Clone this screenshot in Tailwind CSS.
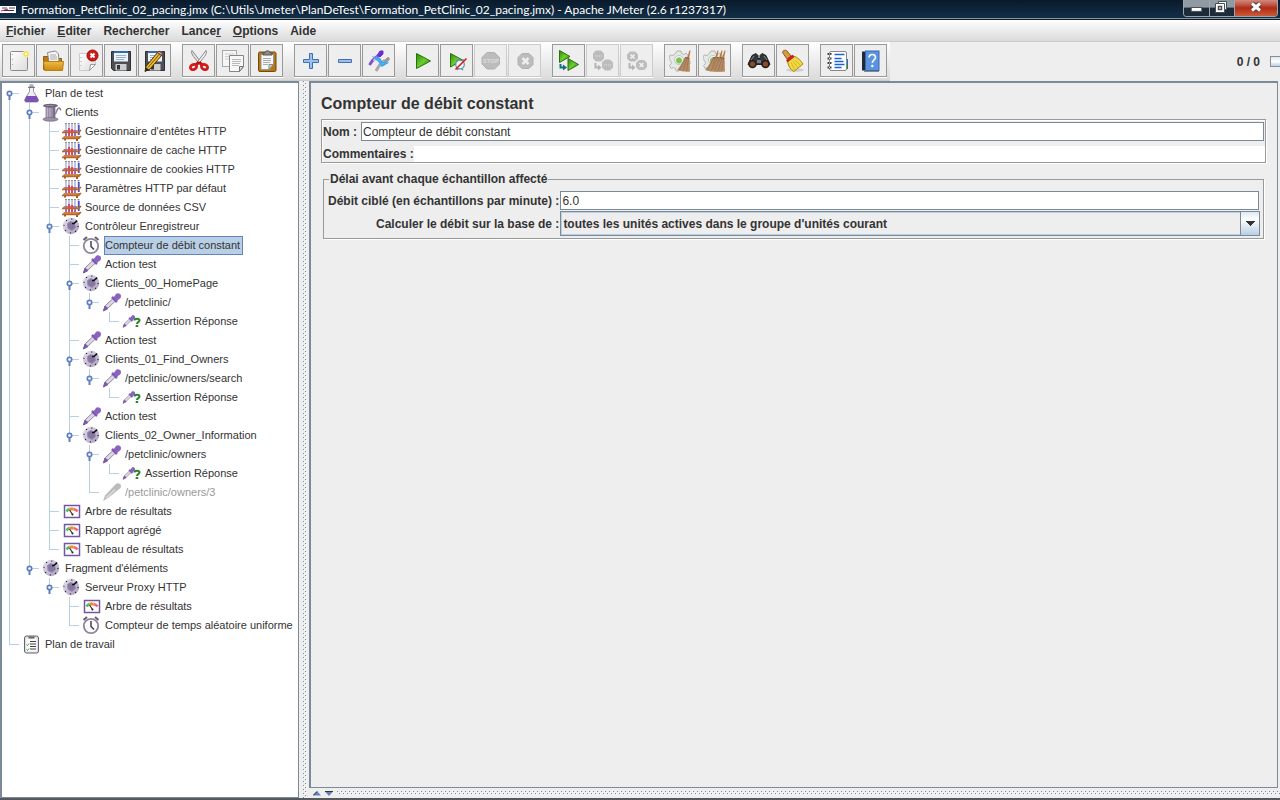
<!DOCTYPE html>
<html lang="fr">
<head>
    <meta charset="UTF-8">
    <meta name="viewport" content="width=device-width, initial-scale=1.0">
    <title>Formation_PetClinic_02_pacing.jmx - Apache JMeter</title>
    <script src="https://cdn.jsdelivr.net/npm/@tailwindcss/browser@4"></script>
</head>
<body class="h-screen flex flex-col overflow-hidden bg-[#eeeeee] text-[#333333] text-[12px] leading-[14px] font-['Liberation_Sans',Arial,sans-serif]">
    <!-- Icon definitions -->
    <svg width="0" height="0" class="absolute" aria-hidden="true">
        <defs>
            <linearGradient id="gPlay" x1="0" y1="0" x2="1" y2="1"><stop offset="0" stop-color="#2a8a08"/><stop offset=".5" stop-color="#6ccf2c"/><stop offset="1" stop-color="#237a04"/></linearGradient>
            <linearGradient id="gPage" x1="0" y1="0" x2="1" y2="1"><stop offset="0" stop-color="#ffffff"/><stop offset="1" stop-color="#dcdcdc"/></linearGradient>
            <linearGradient id="gFolder" x1="0" y1="0" x2="0" y2="1"><stop offset="0" stop-color="#f0bb45"/><stop offset="1" stop-color="#c98a10"/></linearGradient>
            <linearGradient id="gKnob" x1="0" y1="0" x2="1" y2="1"><stop offset="0" stop-color="#e6e1ef"/><stop offset="1" stop-color="#a99dbd"/></linearGradient>
            <pattern id="bumps" width="4" height="4" patternUnits="userSpaceOnUse"><rect width="4" height="4" fill="#eeeeee"/><path fill="#fff" d="M1 1h1v1H1zM3 3h1v1H3z"/><path fill="#7a8a99" d="M0 0h1v1H0zM2 2h1v1H2z"/></pattern>

            <symbol id="new" viewBox="0 0 24 24"><rect x="3.5" y="2.5" width="17" height="19" rx="1" fill="url(#gPage)" stroke="#8a8a8a"/><path d="M5.5 5v1M5.5 10v1M5.5 15v1" stroke="#aaa"/><circle cx="19" cy="5" r="3.5" fill="#f7ee9a"/><circle cx="19" cy="5" r="2" fill="#fffde0" stroke="#e8d63a"/></symbol>
            <symbol id="open" viewBox="0 0 24 24"><path d="M2.5 7.5h5l1 2h12v11h-18z" fill="#b87a14" stroke="#8f5e0c"/><path d="M6.5 3.5l8-1.5 3 3 .5 8-10 1z" fill="#f5f5f5" stroke="#888"/><path d="M9 6h6M9 8h7M9 10h7" stroke="#aaa"/><path d="M2.5 12.5h20l-1 9h-18z" fill="url(#gFolder)" stroke="#b9800f"/></symbol>
            <symbol id="close" viewBox="0 0 24 24"><path d="M4.5 4.5h16v11l-6 6h-10z" fill="url(#gPage)" stroke="#ccc"/><path d="M14.5 21.5l1-6 5 0z" fill="#fff" stroke="#999"/><path d="M6 8v1M6 12v1M6 16v1" stroke="#aaa"/><circle cx="17.5" cy="6.5" r="5.5" fill="#d01818" stroke="#9c0808"/><path d="M15.5 4.5l4 4M19.5 4.5l-4 4" stroke="#fff" stroke-width="2"/></symbol>
            <symbol id="save" viewBox="0 0 24 24"><path d="M2.5 2.5h19v19h-17l-2-2z" fill="#4c4f55" stroke="#2c2f34"/><rect x="5" y="2.5" width="14" height="10" fill="#eef3f9"/><path d="M5 3h14" stroke="#356ca8" stroke-width="2"/><path d="M7 6.5h10M7 8.5h10M7 10.5h8" stroke="#9ab0c8"/><rect x="6.5" y="15" width="11" height="6.5" fill="#cdcdcd"/><rect x="8" y="16" width="3" height="4.5" fill="#33363b"/></symbol>
            <symbol id="pencil" viewBox="0 0 24 24"><path d="M2 22.5l1-5L14.5 3.5l4 3L7 20z" fill="#f0b929" stroke="#4a3508"/><path d="M5 18.5L16.5 5" stroke="#7a5208"/><path d="M2 22.5l1-4 3 2z" fill="#222"/><path d="M14.5 3.5l1.5-1.5 3.5 2.5-1 2z" fill="#e8a090" stroke="#5c3b2c"/></symbol>
            <symbol id="cut" viewBox="0 0 24 24"><path d="M5 1.5c-1 2 0 4 1.5 6l6.5 8 1.5-1.5z" fill="#e4e4e4" stroke="#888"/><path d="M19 1.5c1 2 0 4-1.5 6l-6.5 8-1.5-1.5z" fill="#f4f4f4" stroke="#888"/><path d="M12 13l-3 3M12 13l3 3" stroke="#c01010" stroke-width="3"/><ellipse cx="6.5" cy="18" rx="3.2" ry="2.5" transform="rotate(-25 6.5 18)" fill="#eee" stroke="#d41a1a" stroke-width="2.8"/><ellipse cx="17.5" cy="18" rx="3.2" ry="2.5" transform="rotate(25 17.5 18)" fill="#eee" stroke="#d41a1a" stroke-width="2.8"/></symbol>
            <symbol id="copy" viewBox="0 0 24 24"><rect x="1.5" y="1.5" width="14" height="16" fill="#f6f6f6" stroke="#aaa"/><path d="M4 5h9M4 7.5h7M4 10h4" stroke="#ccc"/><path d="M8.5 6.5h14v11l-4 5h-10z" fill="#f8f8f8" stroke="#858585"/><path d="M11 10.5h9M11 12.5h9M11 14.5h8M11 16.5h7" stroke="#b8b8b8"/><path d="M18.5 22.5v-5h4z" fill="#ddd" stroke="#777"/></symbol>
            <symbol id="paste" viewBox="0 0 24 24"><rect x="3.5" y="3" width="17.5" height="19.5" rx="1.5" fill="#b5770f" stroke="#76490a"/><path d="M6 5.5h12.5v10l-4.5 5H6z" fill="#f7f7f7" stroke="#999"/><path d="M8 9.5h8M8 11.5h8M8 13.5h7M8 15.5h5" stroke="#aaa"/><path d="M14 20.5v-5h4.5z" fill="#d0d0d0" stroke="#888"/><path d="M8 6V4h2c0-3 5-3 5 0h2v2z" fill="#8e9185" stroke="#555"/></symbol>
            <symbol id="plus" viewBox="0 0 24 24"><path d="M10.5 4.5h3v6h6v3h-6v6h-3v-6h-6v-3h6z" fill="#9cc0ea" stroke="#3f70b4"/></symbol>
            <symbol id="minus" viewBox="0 0 24 24"><path d="M5.5 10.5h13v3h-13z" fill="#9cc0ea" stroke="#3f70b4"/></symbol>
            <symbol id="toggle" viewBox="0 0 24 24"><path d="M9 22l3-5 6-6" fill="none" stroke="#a8a8a8" stroke-width="3"/><path d="M17 12l3-3c1.5-1 3 0 2 2l-3 3z" fill="#999" stroke="#999"/><path d="M2.5 16l3-4.5L12 6" fill="none" stroke="#7f52cc" stroke-width="3"/><path d="M6.5 11.5L10 8" stroke="#ddd" stroke-width="1.5"/><path d="M10.5 6L13 2h3v3l-3 3z" fill="#6a2fd0" stroke="#6a2fd0"/><path d="M7.5 8.5l5 1 2.5 4 5 .5-5 3-3-4.5z" fill="#5cc0fa" stroke="#38a4ee" stroke-width="1.5"/></symbol>
            <symbol id="play" viewBox="0 0 24 24"><path d="M5.5 4.5l14 7.5-14 7.5z" fill="url(#gPlay)" stroke="#2c6e10"/></symbol>
            <symbol id="playnow" viewBox="0 0 24 24"><path d="M5.5 4.5l12 6.5-12 7z" fill="url(#gPlay)" stroke="#2c6e10"/><circle cx="15" cy="15.5" r="4.3" fill="#eaf4fa" stroke="#5f8fa8" stroke-width="1.2"/><path d="M11 10.5l2 1.5M19 10.5L17 12M12 21l1.5-1.5M18 21l-1.5-1.5" stroke="#5f8fa8" stroke-width="1.5"/><path d="M10.5 20.5l11-11" stroke="#e01010" stroke-width="1.5"/></symbol>
            <symbol id="stop" viewBox="0 0 24 24"><path d="M8 3.5h7.5l5 5V15l-5 5H8l-5-5V8.5z" fill="#bcbcbc" stroke="#b0b0b0"/><text x="11.8" y="14" text-anchor="middle" font-size="6" font-weight="bold" font-family="Liberation Sans" fill="#ddd">STOP</text></symbol>
            <symbol id="shut" viewBox="0 0 24 24"><path d="M9 4.5h7l4 4v7l-4 4H9l-4-4v-7z" fill="#bcbcbc" stroke="#b0b0b0"/><path d="M9.5 9l6 6M15.5 9l-6 6" stroke="#eee" stroke-width="2.5"/></symbol>
            <symbol id="rstart" viewBox="0 0 24 24"><path d="M2.5 1.5l10.5 6-10.5 6z" fill="url(#gPlay)" stroke="#2c6e10"/><path d="M11 9.5l10.5 6-10.5 6z" fill="url(#gPlay)" stroke="#2c6e10"/><path d="M3.5 15v3.5H7" fill="none" stroke="#136c85" stroke-width="2"/><path d="M6 15.5l4 3-4 3z" fill="#136c85"/></symbol>
            <symbol id="rstop" viewBox="0 0 24 24"><path d="M5 1.5h5l3 3v5l-3 3H5l-3-3v-5zM14 10.5h5l3 3v5l-3 3h-5l-3-3v-5z" fill="#bcbcbc"/><path d="M4 7h7M13 16h7" stroke="#cfcfcf" stroke-width="2" stroke-dasharray="1 1"/><path d="M4.5 14v4.5H8" fill="none" stroke="#b4b4b4" stroke-width="2"/><path d="M7 15.5l3.5 3-3.5 3z" fill="#b4b4b4"/></symbol>
            <symbol id="rshut" viewBox="0 0 24 24"><path d="M5 2.5h5l3 3v4l-3 3H5l-3-3v-4zM14 11h5l3 3v4l-3 3h-5l-3-3v-4z" fill="#bcbcbc"/><path d="M5.5 5.5l4 4M9.5 5.5l-4 4M14.5 14l4 4M18.5 14l-4 4" stroke="#f2f2f2" stroke-width="1.5"/><path d="M4.5 14v4.5H8" fill="none" stroke="#b4b4b4" stroke-width="2"/><path d="M7 15.5l3.5 3-3.5 3z" fill="#b4b4b4"/></symbol>
            <symbol id="gear" viewBox="0 0 24 24"><path d="M8 2h4l.5 2.5 2.5 1 2-1.5 2.500 3-1.500 2 1 2.500 2 .5v3h-2.500l-1.500 2.500 1 2-3 2-2-1.500-2 .5-1 1.500H7l-.5-2.500-2-1-2.500 1-1.500-3 2-2-.5-2L0 9.500 1 6l3 .5 2-1.500z" fill="#e6e8e6" stroke="#b4b8b4"/><circle cx="10" cy="11" r="4.500" fill="#f3f5f3" stroke="#c0c4c0"/><circle cx="10" cy="11.5" r="2.700" fill="#6dd030" stroke="#8fb080" stroke-width=".8"/></symbol>
            <symbol id="bristle" viewBox="0 0 24 24"><path d="M20.500 1.500L18 9l2 .5 1.500-8z" fill="#b5793f"/><path d="M16 8l4.500 1 .5 13.500c-4 .5-9 0-13-1.500 4-4 6-9 8-13z" fill="#b58e68"/><path d="M16.500 9l-6 12M18 9l-4 13M19.500 10l-2 12" stroke="#936d48" stroke-width=".7"/><path d="M16 8.500l4.500 1" stroke="#8b5a30"/></symbol>
            <symbol id="clear" viewBox="0 0 24 24"><use href="#gear"/><use href="#bristle"/></symbol>
            <symbol id="clearall" viewBox="0 0 24 24"><use href="#gear"/><use href="#bristle" x="-6"/><use href="#bristle" x="-2"/><use href="#bristle" x="1"/></symbol>
            <symbol id="find" viewBox="0 0 24 24"><path d="M5 6.5l4-2 2 2v3h2v-3l2-2 4 2 4 9H1z" fill="#33363a" stroke="#1e2022"/><path d="M4 11l3-4M20 11l-3-4" stroke="#85898e"/><circle cx="5.5" cy="15" r="4.3" fill="#202226"/><circle cx="18.5" cy="15" r="4.3" fill="#202226"/><circle cx="5.5" cy="15" r="2.6" fill="#8c4c26"/><circle cx="18.5" cy="15" r="2.6" fill="#8c4c26"/><path d="M10 11h4v3h-4z" fill="#777b80"/></symbol>
            <symbol id="broom" viewBox="0 0 24 24"><ellipse cx="14" cy="21" rx="9" ry="1.8" fill="#cfcfcf"/><path d="M1.5 3.5c0-2 3-3 4.5-1.5l4 5-4 3z" fill="#d99a3b" stroke="#8a5a18"/><path d="M6.5 11.5L12 7c5 1 8 5 10 8l-9 7.5c-4-2-6-6-6.5-11z" fill="#f3d842" stroke="#a88a12"/><path d="M10 13.5l4 7.5M12 12l5 7M14 11l6 6" stroke="#d4b62c"/><path d="M5.5 11l6-5L13 8l-6.5 5z" fill="#d42020" stroke="#9c1010" stroke-width=".6"/></symbol>
            <symbol id="func" viewBox="0 0 24 24"><path d="M20 10h3v5h-3z" fill="#1a74d8"/><path d="M20 15h3v5h-3z" fill="#169030"/><rect x="4.5" y="2.5" width="17" height="19" rx="1.5" fill="#fff" stroke="#888"/><path d="M9.5 5.5h10M9.5 9.5h7M9.5 12.5h9M9.5 15.5h10M9.5 18.5h7" stroke="#1c62e0" stroke-width="1.3"/><path d="M2.5 5h4M2.5 9.5h4M2.5 14h4M2.5 18.5h4" stroke="#444" stroke-width="1.8"/><path d="M4 5h1M4 9.5h1M4 14h1M4 18.5h1" stroke="#eee"/></symbol>
            <symbol id="help" viewBox="0 0 24 24"><path d="M3 2.5h4v19H3z" fill="#1f2a38"/><rect x="6.5" y="2" width="13.5" height="19.5" fill="#5a94e0" stroke="#3968ae"/><path d="M5 22.5h15" stroke="#888"/><path d="M10 8.5c0-4 6.5-4 6.5 0 0 2.5-3.2 2.5-3.2 5.5" fill="none" stroke="#fff" stroke-width="1.6"/><circle cx="13.3" cy="17" r="1.2" fill="#fff"/></symbol>

            <symbol id="flask" viewBox="0 0 20 19"><path d="M7.5 2.5v5L3 15c-1 2 0 3 1.5 3h10c2 0 2.5-1.5 1.5-3l-4.5-7.5v-5z" fill="#f1eef5" stroke="#98929f"/><path d="M4.5 12h10l1.5 3c.5 2 0 3-1.5 3h-10C3 18 2.5 17 3 15.5z" fill="#7b52b4"/><path d="M6 3.5h7M7.5 1h4" stroke="#777"/></symbol>
            <symbol id="spool" viewBox="0 0 20 19"><path d="M13 11c2-1 1.5-6 4-6 1.5 0 1.5 1 1.5 2.5" fill="none" stroke="#8c8298" stroke-width="1.5"/><path d="M3.5 3h10v13h-10z" fill="#9a8da8"/><path d="M5.5 4v12M8 4v12" stroke="#bdb2c9"/><path d="M12 3v13" stroke="#7b6e88" stroke-width="2"/><ellipse cx="8.5" cy="2.7" rx="7.5" ry="2" fill="#6f6379"/><path d="M4 2.5h8" stroke="#978ba2"/><ellipse cx="8.5" cy="16.3" rx="7.5" ry="1.9" fill="#9b90a5" stroke="#75697e" stroke-width=".7"/></symbol>
            <symbol id="tubes" viewBox="0 0 20 19"><path d="M2 8h17l-2 3H0zM2 14h17l-2 3H0z" fill="#cf8645"/><path d="M4 2v12M7 2v12M10 2v12M13 2v12M16.5 2v11" stroke="#c3c6da" stroke-width="2"/><path d="M4 8v6M13 8v6" stroke="#9a6bc4" stroke-width="2"/><path d="M7 6v8M10 7v7" stroke="#d9476c" stroke-width="2"/><path d="M16.8 3v10" stroke="#4552cf" stroke-width="1.6"/><path d="M3 1.5h2M6 1.5h2M9 1.5h2M12 1.5h2M15.5 1.5h2" stroke="#8b8b95"/><path d="M0 10.5h16.500l2.500-2.500M0 16.500h16.500l2.500-2.500" fill="none" stroke="#b3672a" stroke-width="1.6"/><path d="M3 17v1.5M15 17v2" stroke="#a45c22" stroke-width="2"/></symbol>
            <symbol id="knob" viewBox="0 0 20 19"><circle cx="9" cy="9" r="8.2" fill="url(#gKnob)"/><circle cx="9" cy="9" r="7" fill="none" stroke="#1d1826" stroke-width="1.1" stroke-dasharray="1.1 4.4"/><path d="M5.5 6.5l3-2 4 1.5 1 4.5-3.5 3-4-2z" fill="#85769f" stroke="#9a8db0"/><path d="M10 6.5h2l3-3" fill="none" stroke="#111" stroke-width="1.6"/></symbol>
            <symbol id="clock" viewBox="0 0 20 19"><path d="M1.5 4L5 1M16.5 4L13 1" stroke="#6a6075" stroke-width="2.2"/><circle cx="9" cy="10" r="7.2" fill="#fcfbfd" stroke="#8f859a" stroke-width="1.8"/><path d="M9 5v5.5l3 3" fill="none" stroke="#443d4c" stroke-width="1.5"/></symbol>
            <symbol id="dropper" viewBox="0 0 20 19"><path d="M1.5 17.5l2-5 8.500-8L14.500 7 6 15z" fill="#dcd7e3" stroke="#8a7d99" stroke-width=".9"/><path d="M1.5 18L3 13l3 2.5z" fill="#7a58ac" stroke="#7a58ac"/><path d="M10 4l5 5" stroke="#7c59b2" stroke-width="2.5"/><path d="M11.5 4.500L14 1c1.500-1.500 5.200-.5 5 2.200 0 1.500-1 2.500-2 3L14.500 8z" fill="#8b62c2"/></symbol>
            <symbol id="dropperoff" viewBox="0 0 20 19"><path d="M1 18l2-5.5L11 4l3-3c1.500-1.500 5.200-.5 5 2.200 0 1.500-1 2.500-2 3L6 15z" fill="#bcbcbc"/><path d="M4 15l9-8.5" stroke="#dedede" stroke-width="1.2"/></symbol>
            <symbol id="assert" viewBox="0 0 20 19"><use href="#dropper" x="0" y="3" width="14" height="13"/><path d="M12.5 8.5c0-2.5 5-2.500 5 0 0 1.800-2.500 1.500-2.500 3.500" fill="none" stroke="#2b832b" stroke-width="2"/><rect x="13.7" y="13" width="2.5" height="2" fill="#2b832b"/></symbol>
            <symbol id="meter" viewBox="0 0 20 19"><rect x="2.5" y="3.5" width="15" height="12" fill="#fff" stroke="#7457a4" stroke-width="1.5"/><path d="M4.5 9.5c1-1.500 1.500-2 3-2.500" fill="none" stroke="#4fc255" stroke-width="2.5"/><path d="M7.5 7h4" stroke="#ee8b35" stroke-width="3"/><path d="M11.5 7c2 .5 3 1 4 2.500" fill="none" stroke="#ea6f69" stroke-width="2.8"/><path d="M7.5 8l3 4.500" stroke="#333" stroke-width="1.2"/><circle cx="10.5" cy="12.5" r="1" fill="#222"/></symbol>
            <symbol id="bench" viewBox="0 0 20 19"><rect x="2.5" y="1" width="14" height="17" rx="2" fill="#e4e2e8" stroke="#67616d"/><rect x="4.5" y="3.5" width="10" height="13" fill="#fbfbfb"/><path d="M6.5 2.5h6" stroke="#666" stroke-width="2"/><path d="M8 6.5h6M8 9h6M8 11.5h6M8 14h6" stroke="#444" stroke-width="1.2"/><path d="M4.5 9.5l1 1L7 8.500M4.5 14.500l1 1L7 13.500" fill="none" stroke="#3aa33a"/></symbol>
        </defs>
    </svg>

    <!-- Title bar -->
    <header class="h-[20px] shrink-0 flex items-start justify-between bg-linear-to-b from-[#0a1a2b] to-[#12304a] border-b border-[#101820] shadow-[inset_0_-1px_0_#8795a1]">
        <div class="flex items-center h-[19px]">
            <svg class="w-[16px] h-[7px] mr-[5px]" viewBox="0 0 16 7" aria-hidden="true"><rect width="16" height="7" fill="#fff"/><path d="M2 2h5M9 2h6" stroke="#555"/><path d="M1 5l7-2" stroke="#d02060"/><path d="M4 4.5h10" stroke="#43204f"/></svg>
            <h1 class="text-white text-[12px] leading-[19px] whitespace-nowrap font-[Lato,'Noto_Sans',sans-serif]">Formation_PetClinic_02_pacing.jmx (C:\Utils\Jmeter\PlanDeTest\Formation_PetClinic_02_pacing.jmx) - Apache JMeter (2.6 r1237317)</h1>
        </div>
        <div class="flex h-[17px] mr-[2px] border border-t-0 border-[#9aa5ad] rounded-b-[4px] overflow-hidden">
            <button type="button" aria-label="Réduire" class="w-[26px] flex justify-center bg-linear-to-b from-[#8f9aa3] from-45% to-[#1d2b38] to-50% border-r border-[#9aa5ad]">
                <svg width="26" height="16" viewBox="0 0 26 16"><rect x="7.5" y="7.5" width="11" height="4" fill="#fff" stroke="#454d55"/></svg>
            </button>
            <button type="button" aria-label="Restaurer" class="w-[25px] flex justify-center bg-linear-to-b from-[#8f9aa3] from-45% to-[#1d2b38] to-50% border-r border-[#9aa5ad]">
                <svg width="24" height="16" viewBox="0 0 24 16"><path d="M8.5 1.5h8v8h-2v3h-9v-9h3z" fill="#fff" stroke="#454d55"/><path d="M7.5 3.5h7v6" fill="none" stroke="#454d55"/><rect x="8.5" y="6.5" width="3" height="3" fill="#fff" stroke="#454d55" stroke-width="1.5"/></svg>
            </button>
            <button type="button" aria-label="Fermer" class="w-[42px] flex justify-center bg-linear-to-b from-[#d08a80] from-0% via-[#b02a12] via-50% to-[#cc5a38]">
                <svg width="42" height="16" viewBox="0 0 42 16"><path d="M17 3.5l8 7M25 3.5l-8 7" stroke="#5a3a3a" stroke-width="5"/><path d="M17 3.5l8 7M25 3.5l-8 7" stroke="#fff" stroke-width="3"/></svg>
            </button>
        </div>
    </header>

    <!-- Menu -->
    <nav class="h-[22px] shrink-0 flex items-center gap-[12px] pl-[6px] font-bold bg-linear-to-b from-white to-[#dadada] border-b border-[#cccccc]">
        <button type="button" class="font-bold"><u>F</u>ichier</button>
        <button type="button" class="font-bold"><u>E</u>diter</button>
        <button type="button" class="font-bold">Rechercher</button>
        <button type="button" class="font-bold">Lance<u>r</u></button>
        <button type="button" class="font-bold"><u>O</u>ptions</button>
        <button type="button" class="font-bold">Aide</button>
    </nav>

    <!-- Toolbar -->
    <div class="h-[39px] shrink-0 flex items-center justify-between">
        <div id="toolbar" class="h-full flex items-start gap-[11px] pl-[2px] pr-[3px] pt-[2px] bg-linear-to-b from-white to-[#dadada] border-b border-[#cccccc]"></div>
        <div class="flex items-center gap-[10px]">
            <span class="font-bold">0 / 0</span>
            <span class="w-[10px] h-[11px] border border-r-0 border-[#8a8f96] bg-linear-to-b from-[#dde6f0] to-[#b8cfe5] via-white"></span>
        </div>
    </div>

    <!-- Split pane -->
    <div class="flex-1 min-h-0 flex border-b-2 border-[#55585c]">
        <aside class="w-[299px] shrink-0 pt-px bg-white border-2 border-r border-b border-[#7a8a99] overflow-auto">
            <ul id="tree" role="tree" class="text-[11px]"></ul>
        </aside>
        <div class="w-[10px] shrink-0 pl-[4px] pr-[2px] cursor-col-resize bg-[#eeeeee]">
            <svg class="block w-full h-full" aria-hidden="true"><rect width="100%" height="100%" fill="url(#bumps)"/></svg>
        </div>

        <div class="flex-1 min-w-0 flex flex-col">
            <main class="flex-1 min-h-0 border-2 border-r border-b border-[#7a8a99] mr-[2px] pl-[10px] pr-[11px] pt-[11px]">
                <h2 class="text-[16px] leading-[20px] font-bold mb-[5px]">Compteur de débit constant</h2>

                <div class="border border-[#999999] shadow-[1px_1px_0_#fff,inset_1px_1px_0_#fff] pl-px">
                    <div class="flex items-center pt-[2px] pr-px">
                        <label for="nom" class="font-bold pr-[4px]">Nom :</label>
                        <input id="nom" type="text" value="Compteur de débit constant" class="flex-1 min-w-0 h-[19px] px-px bg-white border border-[#7a8a99] outline-none">
                    </div>
                    <div class="flex items-center mt-[5px]">
                        <label for="commentaires" class="font-bold">Commentaires :</label>
                        <input id="commentaires" type="text" class="flex-1 min-w-0 h-[16px] bg-white outline-none">
                    </div>
                </div>

                <fieldset class="mt-[9px] ml-[2px] mr-[2px] pl-[4px] pr-[3px] pb-[2px] border border-[#999999] shadow-[1px_1px_0_#fff]">
                    <legend class="font-bold px-px ml-px">Délai avant chaque échantillon affecté</legend>
                    <div class="grid grid-cols-[auto_1fr] items-center gap-px pt-[5px]">
                        <label for="debit" class="font-bold text-right">Débit ciblé (en échantillons par minute) :</label>
                        <input id="debit" type="text" value="6.0" class="min-w-0 h-[19px] px-px mr-px bg-white border border-[#7a8a99] outline-none">
                        <label for="base" class="font-bold text-right">Calculer le débit sur la base de :</label>
                        <div class="relative">
                            <select id="base" class="block w-full h-[25px] pl-[2px] appearance-none font-bold bg-[#eeeeee] border border-[#7a8a99] shadow-[inset_0_0_0_1px_#b8cfe5] outline-none">
                                <option>toutes les unités actives dans le groupe d'unités courant</option>
                                <option>cette unité uniquement</option>
                                <option>toutes les unités actives</option>
                            </select>
                            <span class="absolute right-0 top-0 w-[20px] h-[25px] flex items-center justify-center pointer-events-none border border-[#7a8a99] bg-linear-to-b from-[#dde8f3] via-white via-30% to-[#b8cfe5]">
                                <svg width="10" height="5" viewBox="0 0 10 5" shape-rendering="crispEdges"><path d="M0 0h10L5 5z" fill="#333"/></svg>
                            </span>
                        </div>
                    </div>
                </fieldset>
            </main>
            <div class="h-[10px] shrink-0 flex items-center gap-[4px] pl-[4px] cursor-row-resize">
                <svg width="8" height="5" viewBox="0 0 8 5" aria-hidden="true"><path d="M4 0l4 4.5H0z" fill="#6382bf"/><path d="M0 4.5L4 .5" stroke="#333"/></svg>
                <svg width="8" height="5" viewBox="0 0 8 5" aria-hidden="true"><path d="M4 5L0 .5h8z" fill="#6382bf"/><path d="M0 .5h8" stroke="#333"/></svg>
                <svg class="flex-1 h-[4px]" aria-hidden="true"><rect width="100%" height="100%" fill="url(#bumps)"/></svg>
            </div>
        </div>
    </div>

    <script>
        // [icon, tooltip, disabled]
        const groups = [
            [['new', 'Nouveau'], ['open', 'Ouvrir'], ['close', 'Fermer'], ['save', 'Enregistrer'], ['save pencil', 'Enregistrer sous']],
            [['cut', 'Couper'], ['copy', 'Copier'], ['paste', 'Coller']],
            [['plus', 'Tout déplier'], ['minus', 'Tout replier'], ['toggle', 'Permuter']],
            [['play', 'Lancer'], ['playnow', 'Lancer sans pauses'], ['stop', 'Arrêter', 1], ['shut', 'Éteindre', 1]],
            [['rstart', 'Démarrage distant'], ['rstop', 'Arrêt distant', 1], ['rshut', 'Extinction distante', 1]],
            [['clear', 'Nettoyer'], ['clearall', 'Nettoyer tout']],
            [['find', 'Rechercher'], ['broom', 'Réinitialiser la recherche']],
            [['func', 'Assistant de fonctions'], ['help', 'Aide']]
        ];

        document.getElementById('toolbar').innerHTML = groups.map(group => `
            <div class="flex gap-px">
                ${group.map(([icon, label, off]) => `
                    <button type="button" aria-label="${label}" ${off ? 'disabled' : ''}
                        class="w-[33px] h-[33px] flex items-center justify-center bg-[#eeeeee] border ${off ? 'border-[#cccccc]' : 'border-[#999999]'} shadow-[0_1px_0_#fff]">
                        <svg width="24" height="24">${icon.split(' ').map(i => `<use href="#${i}" width="24" height="24"/>`).join('')}</svg>
                    </button>`).join('')}
            </div>`).join('');

        // Guides: | line, T branch, L last branch, f/o/c open handle (first, middle, last)
        const nodes = [
            ['f', 'flask', 'Plan de test'],
            ['|o', 'spool', 'Clients'],
            ['||T', 'tubes', "Gestionnaire d'entêtes HTTP"],
            ['||T', 'tubes', 'Gestionnaire de cache HTTP'],
            ['||T', 'tubes', 'Gestionnaire de cookies HTTP'],
            ['||T', 'tubes', 'Paramètres HTTP par défaut'],
            ['||T', 'tubes', 'Source de données CSV'],
            ['||o', 'knob', 'Contrôleur Enregistreur'],
            ['|||T', 'clock', 'Compteur de débit constant', 'selected'],
            ['|||T', 'dropper', 'Action test'],
            ['|||o', 'knob', 'Clients_00_HomePage'],
            ['||||c', 'dropper', '/petclinic/'],
            ['|||| L', 'assert', 'Assertion Réponse'],
            ['|||T', 'dropper', 'Action test'],
            ['|||o', 'knob', 'Clients_01_Find_Owners'],
            ['||||c', 'dropper', '/petclinic/owners/search'],
            ['|||| L', 'assert', 'Assertion Réponse'],
            ['|||T', 'dropper', 'Action test'],
            ['|||c', 'knob', 'Clients_02_Owner_Information'],
            ['||| o', 'dropper', '/petclinic/owners'],
            ['||| |L', 'assert', 'Assertion Réponse'],
            ['||| L', 'dropperoff', '/petclinic/owners/3', 'disabled'],
            ['||T', 'meter', 'Arbre de résultats'],
            ['||T', 'meter', 'Rapport agrégé'],
            ['||L', 'meter', 'Tableau de résultats'],
            ['|c', 'knob', "Fragment d'éléments"],
            ['| c', 'knob', 'Serveur Proxy HTTP'],
            ['|  T', 'meter', 'Arbre de résultats'],
            ['|  L', 'clock', 'Compteur de temps aléatoire uniforme'],
            ['L', 'bench', 'Plan de travail']
        ];
        const lines = {
            ' ': '', '|': 'M7.5 0v19', 'T': 'M7.5 0v19M7 9.5h10', 'L': 'M7.5 0v10M7 9.5h10',
            'f': 'M7.5 9v10M7 9.5h10', 'o': 'M7.5 0v19M7 9.5h10', 'c': 'M7.5 0v10M7 9.5h10'
        };
        const handle = '<path d="M7.5 11v5" stroke="#5f7fbf" stroke-width="2"/><circle cx="7.5" cy="9.5" r="2.2" fill="#fff" stroke="#5f7fbf" stroke-width="1.7"/>';
        const states = {
            selected: 'border-[#6382bf] bg-[#b8cfe5]',
            disabled: 'border-transparent text-[#999999]',
            normal: 'border-transparent'
        };

        document.getElementById('tree').innerHTML = nodes.map(([guides, icon, label, state]) => `
            <li role="treeitem" aria-level="${guides.length}" class="flex h-[19px] whitespace-nowrap">
                ${[...guides].map(g => `<svg class="w-[20px] h-[19px] shrink-0" viewBox="0 0 20 19"><path d="${lines[g]}" fill="none" stroke="#b8cfe5"/>${'foc'.includes(g) ? handle : ''}</svg>`).join('')}
                <svg class="w-[20px] h-[19px] mr-[2px] shrink-0"><use href="#${icon}" width="20" height="19"/></svg>
                <span class="border pr-[2px] leading-[17px] ${states[state || 'normal']}">${label}</span>
            </li>`).join('');
    </script>
</body>
</html>
